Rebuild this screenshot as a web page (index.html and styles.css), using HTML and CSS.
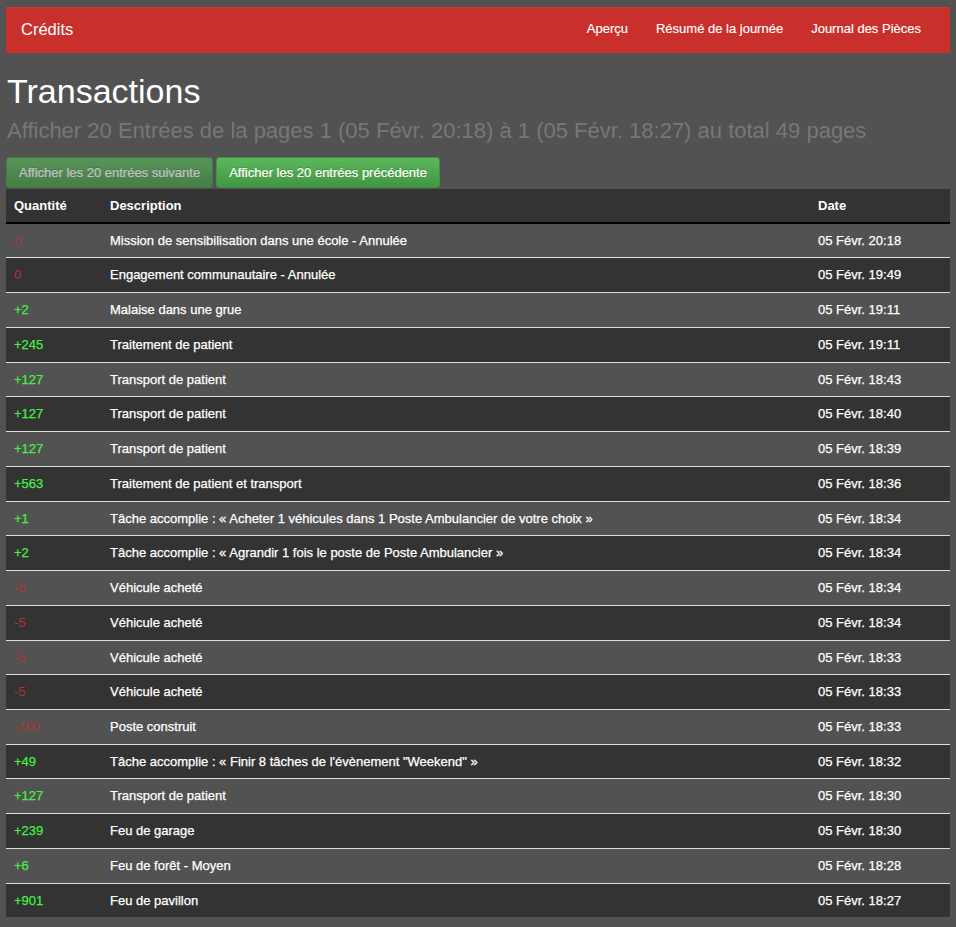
FILE: index.html
```html
<!DOCTYPE html>
<html lang="fr">
<head>
<meta charset="utf-8">
<title>Transactions</title>
<link rel="stylesheet" href="styles.css">
</head>
<body>
<div class="page">
  <nav class="navbar">
    <a class="brand" href="#">Crédits</a>
    <ul class="nav-links">
      <li><a href="#">Aperçu</a></li>
      <li><a href="#">Résumé de la journée</a></li>
      <li><a href="#">Journal des Pièces</a></li>
    </ul>
  </nav>

  <h1 class="title">Transactions</h1>
  <p class="subtitle">Afficher 20 Entrées de la pages 1 (05 Févr. 20:18) à 1 (05 Févr. 18:27) au total 49 pages</p>

  <div class="btn-row">
    <a class="btn btn-success disabled" href="#">Afficher les 20 entrées suivante</a>
    <a class="btn btn-success" href="#">Afficher les 20 entrées précédente</a>
  </div>

  <table class="tx-table">
    <thead>
      <tr><th class="col-qty">Quantité</th><th class="col-desc">Description</th><th class="col-date">Date</th></tr>
    </thead>
    <tbody>
      <tr><td class="neg">0</td><td>Mission de sensibilisation dans une école - Annulée</td><td>05 Févr. 20:18</td></tr>
      <tr><td class="neg">0</td><td>Engagement communautaire - Annulée</td><td>05 Févr. 19:49</td></tr>
      <tr><td class="pos">+2</td><td>Malaise dans une grue</td><td>05 Févr. 19:11</td></tr>
      <tr><td class="pos">+245</td><td>Traitement de patient</td><td>05 Févr. 19:11</td></tr>
      <tr><td class="pos">+127</td><td>Transport de patient</td><td>05 Févr. 18:43</td></tr>
      <tr><td class="pos">+127</td><td>Transport de patient</td><td>05 Févr. 18:40</td></tr>
      <tr><td class="pos">+127</td><td>Transport de patient</td><td>05 Févr. 18:39</td></tr>
      <tr><td class="pos">+563</td><td>Traitement de patient et transport</td><td>05 Févr. 18:36</td></tr>
      <tr><td class="pos">+1</td><td>Tâche accomplie : « Acheter 1 véhicules dans 1 Poste Ambulancier de votre choix »</td><td>05 Févr. 18:34</td></tr>
      <tr><td class="pos">+2</td><td>Tâche accomplie : « Agrandir 1 fois le poste de Poste Ambulancier »</td><td>05 Févr. 18:34</td></tr>
      <tr><td class="neg">-5</td><td>Véhicule acheté</td><td>05 Févr. 18:34</td></tr>
      <tr><td class="neg">-5</td><td>Véhicule acheté</td><td>05 Févr. 18:34</td></tr>
      <tr><td class="neg">-5</td><td>Véhicule acheté</td><td>05 Févr. 18:33</td></tr>
      <tr><td class="neg">-5</td><td>Véhicule acheté</td><td>05 Févr. 18:33</td></tr>
      <tr><td class="neg">-100</td><td>Poste construit</td><td>05 Févr. 18:33</td></tr>
      <tr><td class="pos">+49</td><td>Tâche accomplie : « Finir 8 tâches de l'évènement "Weekend" »</td><td>05 Févr. 18:32</td></tr>
      <tr><td class="pos">+127</td><td>Transport de patient</td><td>05 Févr. 18:30</td></tr>
      <tr><td class="pos">+239</td><td>Feu de garage</td><td>05 Févr. 18:30</td></tr>
      <tr><td class="pos">+6</td><td>Feu de forêt - Moyen</td><td>05 Févr. 18:28</td></tr>
      <tr><td class="pos">+901</td><td>Feu de pavillon</td><td>05 Févr. 18:27</td></tr>
    </tbody>
  </table>
</div>
</body>
</html>
```
FILE: styles.css
```css
html, body {
  margin: 0;
  padding: 0;
  background: #525252;
  font-family: "Liberation Sans", Arial, sans-serif;
  color: #fff;
}

.page {
  padding: 7px 6px 0;
}

.navbar {
  display: flex;
  align-items: center;
  justify-content: space-between;
  height: 46px;
  box-sizing: border-box;
  background: #c9302c;
  border-top: 1px solid #b84040;
  padding: 0 29px 3px 15px;
}

.brand {
  color: #fff;
  text-decoration: none;
  font-size: 16.5px;
  line-height: 20px;
}

.nav-links {
  list-style: none;
  margin: 0;
  padding: 0;
  display: flex;
  gap: 28px;
}

.nav-links a {
  color: #fff;
  text-decoration: none;
  font-size: 13px;
  line-height: 20px;
  -webkit-text-stroke: 0.15px #fff;
}

.title {
  margin: 20px 0 0 1px;
  font-size: 34px;
  font-weight: normal;
  line-height: 36px;
  color: #fff;
}

.subtitle {
  margin: 10px 0 0 1px;
  font-size: 22px;
  line-height: 24px;
  color: #777;
}

.btn-row {
  display: flex;
  gap: 3px;
  margin-top: 14px;
}

.btn {
  display: block;
  height: 31px;
  box-sizing: border-box;
  padding: 0 12px;
  font-size: 13px;
  line-height: 29px;
  color: #fff;
  text-decoration: none;
  border-radius: 3px;
  border: 1px solid #3e8f3e;
  -webkit-text-stroke: 0.2px #fff;
}

.btn-success {
  background: linear-gradient(to bottom, #5cb85c 0%, #419641 100%);
  text-shadow: 0 -1px 0 rgba(0, 0, 0, 0.2);
}

.btn.disabled {
  opacity: 0.65;
}

.tx-table {
  margin-top: 1px;
  width: 100%;
  border-collapse: separate;
  border-spacing: 0;
  font-size: 13px;
}

.tx-table th {
  background: #333;
  text-align: left;
  font-weight: bold;
  padding: 7.5px 8px;
  line-height: 17.74px;
  border-bottom: 2px solid #000;
}

.tx-table td {
  padding: 8px;
  line-height: 17.74px;
  border-top: 1px solid #ddd;
  color: #fff;
  -webkit-text-stroke: 0.25px currentColor;
}

.tx-table tbody tr:first-child td {
  border-top: 0;
}

.tx-table tbody tr:nth-child(even) td {
  background: #333;
}

.col-qty { width: 80px; }
.col-date { width: 124px; }

.tx-table td.pos { color: #44ee44; }
.tx-table td.neg {
  color: #b03333;
  -webkit-text-stroke: 0;
}
```
